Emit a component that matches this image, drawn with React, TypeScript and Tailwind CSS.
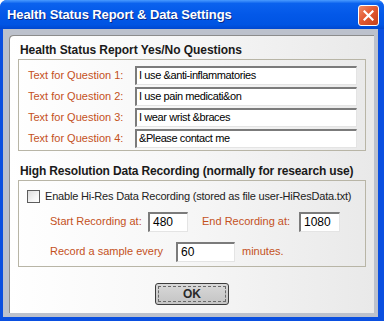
import React from 'react';

const font = { fontFamily: '"Liberation Sans", Arial, sans-serif' };

const Field: React.FC<{ value: string; className?: string }> = ({ value, className }) => (
  <div
    className={`h-[20px] bg-white border-t-2 border-l-2 border-b border-r border-t-[#7b7b7b] border-l-[#7b7b7b] border-b-[#e4e4e4] border-r-[#e4e4e4] pl-[3px] text-[12px] leading-[17px] text-black ${className ?? ''}`}
  >
    {value}
  </div>
);

const questions = [
  'I use &anti-inflammatories',
  'I use pain medicati&on',
  'I wear wrist &braces',
  '&Please contact me',
];

export default function App() {
  return (
    <div className="w-[384px] h-[321px] flex flex-col bg-[#0a4fe0] rounded-t-[7px] overflow-hidden" style={font}>
      {/* title bar */}
      <div className="h-[29px] flex items-center justify-between pl-[7px] pr-[5px] bg-[linear-gradient(180deg,#4a9bff_0%,#0b62ee_12%,#0358e8_50%,#0054e3_85%,#0047d0_100%)]">
        <span className="text-white font-bold text-[13px] tracking-[-0.1px] [text-shadow:1px_1px_0_#0a2a8a]">
          Health Status Report &amp; Data Settings
        </span>
        <button className="w-[21px] h-[21px] mt-[2px] rounded-[3px] border border-white bg-[linear-gradient(135deg,#f08a66_0%,#e35a32_45%,#c53f1a_100%)] flex items-center justify-center">
          <svg width="11" height="11" viewBox="0 0 11 11">
            <path d="M1.5 1.5 L9.5 9.5 M9.5 1.5 L1.5 9.5" stroke="white" strokeWidth="2.2" strokeLinecap="square" />
          </svg>
        </button>
      </div>

      {/* body frame */}
      <div className="flex-1 ml-[3px] mr-[6px] mb-[4px] bg-[#bcc1cc] pl-[6px] pr-[4px] pt-[6px] pb-[4px] flex">
        <div className="flex-1 rounded-tl-[4px] shadow-[inset_1px_1px_0_#8c8c8c] bg-[linear-gradient(90deg,#ffffff_0%,#f6f6f6_50%,#e9e9e9_100%)] pt-[8px] pl-[9px] pr-[8px] flex flex-col">
          <div className="text-[12px] font-bold leading-[14px] text-[#1a1a1a] pl-[2px] mb-[2px] tracking-[-0.05px]">
            Health Status Report Yes/No Questions
          </div>
          <div className="border border-[#b8b5a6] pt-[6px] pb-[2px] pl-[9px] pr-[8px] flex flex-col gap-[2px]">
            {questions.map((q, i) => (
              <div key={i} className="flex items-center">
                <span className="w-[107px] text-[11px] text-[#c4511c]">Text for Question {i + 1}:</span>
                <div className="flex-1 h-[19px] bg-white border-t-2 border-l-2 border-b border-r border-t-[#7b7b7b] border-l-[#7b7b7b] border-b-[#e4e4e4] border-r-[#e4e4e4] pl-[2px] text-[11px] leading-[15px] text-black tracking-[-0.4px]">
                  {q}
                </div>
              </div>
            ))}
          </div>

          <div className="text-[12px] font-bold leading-[14px] text-[#1a1a1a] pl-[2px] mt-[13px] mb-[2px] whitespace-nowrap tracking-[-0.15px]">
            High Resolution Data Recording (normally for research use)
          </div>
          <div className="border border-[#b8b5a6] pt-[7px] pb-[4px] pl-[8px] flex flex-col">
            <label className="flex items-center gap-[5px] text-[11px] text-[#222] whitespace-nowrap tracking-[-0.2px]">
              <span className="w-[13px] h-[13px] shrink-0 border border-[#5d5d5d] bg-[linear-gradient(135deg,#dcdcdc_0%,#f4f4f4_60%,#ffffff_100%)]" />
              Enable Hi-Res Data Recording (stored as file user-HiResData.txt)
            </label>
            <div className="flex items-center mt-[7px] pl-[23px]">
              <span className="text-[11px] text-[#c4511c] w-[98px]">Start Recording at:</span>
              <Field value="480" className="w-[40px]" />
              <span className="text-[11px] text-[#c4511c] ml-[14px] w-[97px]">End Recording at:</span>
              <Field value="1080" className="w-[41px]" />
            </div>
            <div className="flex items-center mt-[10px] pl-[23px]">
              <span className="text-[11px] text-[#c4511c] w-[126px]">Record a sample every</span>
              <Field value="60" className="w-[59px]" />
              <span className="text-[11px] text-[#c4511c] ml-[7px]">minutes.</span>
            </div>
          </div>

          <div className="flex justify-center mt-[16px]">
            <button className="w-[74px] h-[22px] rounded-[3px] border border-[#3c3c3c] bg-[linear-gradient(180deg,#d8d8d8_0%,#c4c4c4_100%)] p-[2px]">
              <div className="w-full h-full border border-dashed border-[#6a6a6a] flex items-center justify-center text-[12px] font-bold text-[#2a2a2a]">
                OK
              </div>
            </button>
          </div>
        </div>
      </div>
    </div>
  );
}
